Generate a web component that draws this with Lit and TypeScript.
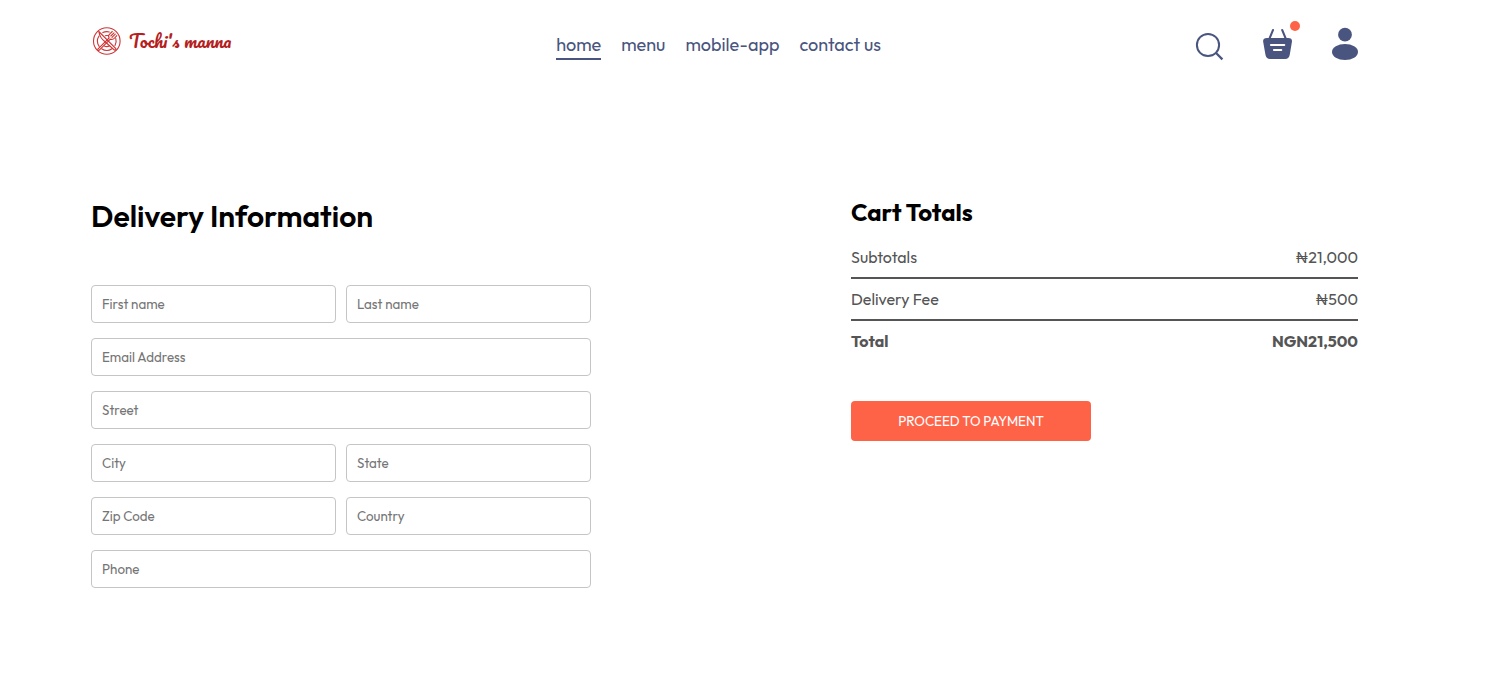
import { LitElement, html, svg, css } from "lit";
import { customElement, state } from "lit/decorators.js";

interface Field { name: string; label: string; type?: string }

const ROWS: Field[][] = [
  [{ name: "firstName", label: "First name" }, { name: "lastName", label: "Last name" }],
  [{ name: "email", label: "Email Address", type: "email" }],
  [{ name: "street", label: "Street" }],
  [{ name: "city", label: "City" }, { name: "state", label: "State" }],
  [{ name: "zipCode", label: "Zip Code" }, { name: "country", label: "Country" }],
  [{ name: "phone", label: "Phone" }],
];

@customElement("site-header")
class SiteHeader extends LitElement {
  @state() private active = "home";

  static styles = css`
    :host { display: flex; justify-content: space-between; align-items: center; height: 88px; box-sizing: border-box; }
    .logo { width: 150px; height: 50px; margin-bottom: 6px; }
    .logo text { font: 400 17.8px Pacifico, cursive; fill: #b51f1f; }
    nav { display: flex; gap: 20px; margin-left: 2px; color: #49557e; font-size: 18px; line-height: 23px; }
    nav a { padding-bottom: 2px; border-bottom: 2px solid transparent; margin-top: 4px; cursor: pointer; }
    nav a.active { border-color: #49557e; }
    .actions { display: flex; align-items: center; gap: 38px; height: 50px; margin-right: -1px; }
    .actions svg { display: block; }
    .actions .search { margin: 4px 1px 0 0; }
    .basket { position: relative; }
    .dot { position: absolute; top: -7px; right: -7px; width: 10px; height: 10px; border-radius: 50%; background: tomato; }
  `;

  render() {
    return html`
      <svg class="logo" viewBox="0 0 150 50">
        ${svg`<g fill="none" stroke="#cf3535" stroke-width="1.1" stroke-linecap="round" transform="translate(15.8 25)">
          <circle r="13.3"/>
          <path d="M-7.8 -5A9.3 9.3 0 0 0 -7.6 5.4M-5.2 7.8A9.3 9.3 0 0 0 5.2 7.8M8.2 4.5A9.3 9.3 0 0 0 9 -2.5M-4 -8.4A9.3 9.3 0 0 1 2.5 -9"/>
          <path d="M-2.5 5A5.5 5.5 0 0 0 2.8 4.7M-1.5 -5.3A5.5 5.5 0 0 1 1.8 -5.2"/>
          <path d="M-8 -9.5L9 7.5Q9.5 9.5 7.5 9L-2 .5Q-7 -3 -8 -9.5Z"/>
          <path d="M-9 8.2L2.3 -3M-7.8 9.3L3.5 -1.8M-9 8.2Q-9.4 9.6 -7.8 9.3M2.3 -3Q1 -5.5 3 -7.2L5.5 -9.5M3.5 -1.8Q6 -1 7.8 -3L10 -5.3M4 -5L7.2 -8.2M5.2 -3.7L8.5 -6.9"/>
        </g>`}
        <text x="38" y="31.8">Tochi's manna</text>
      </svg>
      <nav>
        ${["home", "menu", "mobile-app", "contact us"].map(
          (item) => html`<a class=${item === this.active ? "active" : ""} @click=${() => (this.active = item)}>${item}</a>`
        )}
      </nav>
      <div class="actions">
        <svg class="search" width="30" height="30" viewBox="0 0 30 30" fill="none" stroke="#49557e" stroke-width="2">
          <circle cx="14" cy="14" r="11.1"/><path d="M21.8 21.8L28.4 28.4" stroke-width="2.2"/>
        </svg>
        <div class="basket">
          <svg width="30" height="32" viewBox="0 0 30 32">
            <path d="M4 10H25.2Q29.6 10 28.9 14L26.7 27Q25.8 31 22.3 31H7Q3.400 31 2.500 27L.2 14Q-.5 10 4 10Z" fill="#49557e"/>
            <path d="M6.500 10.500L10 2M22.700 10.500L19.200 2" stroke="#49557e" stroke-width="2" stroke-linecap="round"/>
            <path d="M8 17H21.200M11 22H18.200" stroke="#fff" stroke-width="2.200" stroke-linecap="round"/>
          </svg>
          <span class="dot"></span>
        </div>
        <svg width="28" height="34" viewBox="0 0 28 34" fill="#49557e">
          <circle cx="14" cy="7.700" r="6.900"/><ellipse cx="14" cy="25" rx="13" ry="8"/>
        </svg>
      </div>
    `;
  }
}

@customElement("cart-totals")
class CartTotals extends LitElement {
  static styles = css`
    :host { display: block; color: #555; font-size: 16px; line-height: 20px; }
    h2 { margin: -1px 0 20px; color: #000; font-size: 24px; line-height: 30px; font-weight: 700; }
    .row { display: flex; justify-content: space-between; }
    .total { font-weight: 700; }
    hr { height: 0; margin: 10px 0; border: 0; border-top: 2px solid #555; }
    button { display: block; margin-top: 50px; width: 240px; height: 40px; padding: 0; border: 0; border-radius: 4px; background: tomato; color: #fff; font: inherit; font-size: 13.333px; cursor: pointer; }
  `;

  render() {
    return html`
      <h2>Cart Totals</h2>
      <div class="row"><span>Subtotals</span><span>₦21,000</span></div>
      <hr />
      <div class="row"><span>Delivery Fee</span><span>₦500</span></div>
      <hr />
      <div class="row total"><span>Total</span><span>NGN21,500</span></div>
      <button type="button">PROCEED TO PAYMENT</button>
    `;
  }
}

@customElement("app-root")
class AppRoot extends LitElement {
  static styles = css`
    :host { display: block; min-height: 695px; box-sizing: border-box; padding: 0 151px 0 91px; background: #fff; font-family: Outfit, Lato, sans-serif; }
    main { display: flex; justify-content: space-between; align-items: flex-start; padding-top: 110px; }
    form { width: 500px; }
    h1 { margin: 0 0 50px; font-size: 30px; line-height: 37px; font-weight: 600; }
    .fields { display: flex; flex-direction: column; gap: 15px; }
    .row { display: flex; gap: 10px; }
    input { flex: 1; min-width: 0; height: 38px; box-sizing: border-box; padding: 0 10px; border: 1px solid #c5c5c5; border-radius: 4px; outline: 0; font: inherit; font-size: 13.333px; }
    input::placeholder { color: #757575; opacity: 1; }
    cart-totals { width: 507px; }
  `;

  render() {
    return html`
      <site-header></site-header>
      <main>
        <form>
          <h1>Delivery Information</h1>
          <div class="fields">
            ${ROWS.map(
              (row) => html`<div class="row">
                ${row.map((f) => html`<input name=${f.name} type=${f.type ?? "text"} placeholder=${f.label} />`)}
              </div>`
            )}
          </div>
        </form>
        <cart-totals></cart-totals>
      </main>
    `;
  }
}
